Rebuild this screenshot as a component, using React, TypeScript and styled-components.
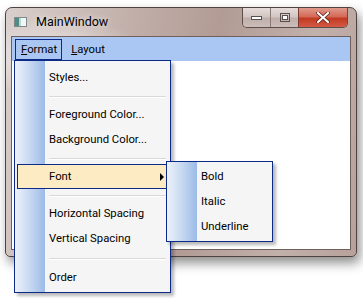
import React from 'react'
import styled, { createGlobalStyle } from 'styled-components'

const GlobalStyle = createGlobalStyle`
  html, body {
    margin: 0;
    padding: 0;
    background: #fff;
  }
  body {
    width: 363px;
    height: 299px;
    overflow: hidden;
    font-family: Roboto, 'Liberation Sans', sans-serif;
    font-size: 11.3px;
    color: #000;
  }
`

const Window = styled.div`
  margin: 7px 0 0 5px;
  width: 352px;
  height: 250px;
  box-sizing: border-box;
  border: 1px solid #4f4240;
  border-radius: 7px 7px 5px 5px;
  background: radial-gradient(ellipse 90px 40px at 15% 20%, rgba(255, 255, 255, 0.7), transparent),
    linear-gradient(100deg, #d9cfcc 0%, #c3b1ac 30%, #b29b95 55%, #c2b0ab 80%, #b8a19b 100%);
  box-shadow: 3px 6px 12px rgba(0, 0, 0, 0.45);
  display: flex;
  flex-direction: column;
`

const TitleBar = styled.div`
  height: 28px;
  display: flex;
  align-items: flex-start;
`

const AppIcon = styled.svg`
  margin: 9px 0 0 8px;
  flex: none;
`

const Title = styled.div`
  margin: 6px 0 0 9px;
  font-size: 12.5px;
  color: #000;
  text-shadow: 0 0 6px rgba(255, 255, 255, 0.9);
`

const Caption = styled.div`
  margin-left: auto;
  margin-right: 8px;
  display: flex;
  height: 19px;
  border: 1px solid #5c4e4b;
  border-top: none;
  border-radius: 0 0 5px 5px;
  overflow: hidden;
`

const CaptionButton = styled.div<{ $w: number; $close?: boolean }>`
  width: ${p => p.$w}px;
  display: flex;
  align-items: center;
  justify-content: center;
  border-left: ${p => (p.$close ? '1px solid #7a3a30' : '1px solid #8a7b78')};
  background: ${p =>
    p.$close
      ? 'linear-gradient(#e09a8c 0%, #d36a58 45%, #c23a22 55%, #d45a44 100%)'
      : 'linear-gradient(#e6dcda 0%, #d3c6c3 45%, #bfaeaa 55%, #cdbdb9 100%)'};
  &:first-child {
    border-left: none;
  }
`

const Client = styled.div`
  position: relative;
  flex: 1;
  margin: 0 5px 6px 5px;
  border: 1px solid #6e605d;
  background: #fff;
  display: flex;
  flex-direction: column;
`

const MenuBar = styled.div`
  height: 24px;
  background: #aac7f3;
  display: flex;
  align-items: flex-start;
  padding: 2px 0 0 3px;
  box-sizing: border-box;
`

const BarItem = styled.div<{ $open?: boolean }>`
  height: 21px;
  box-sizing: border-box;
  padding: 0 4px 0 5px;
  display: flex;
  align-items: center;
  border: 1px solid ${p => (p.$open ? '#0d2a86' : 'transparent')};
  margin-right: 3px;
`

const Key = styled.span`
  text-decoration: underline;
`

const Menu = styled.div<{ $left: number; $top: number; $width: number; $pad: number }>`
  position: absolute;
  left: ${p => p.$left}px;
  top: ${p => p.$top}px;
  width: ${p => p.$width}px;
  box-sizing: border-box;
  padding: ${p => p.$pad}px 0 2px;
  border: 1px solid #0d2a86;
  background: linear-gradient(90deg, #eef2fa 0px, #c9daf2 14px, #9cbbe7 30px, #f5f5f5 30px);
  box-shadow: 3px 3px 3px rgba(0, 0, 0, 0.28);
  display: flex;
  flex-direction: column;
`

const Item = styled.div<{ $active?: boolean }>`
  height: 25px;
  box-sizing: border-box;
  margin: 0 2px;
  padding-left: 31px;
  display: flex;
  align-items: center;
  border: 1px solid ${p => (p.$active ? '#0d2a86' : 'transparent')};
  background: ${p => (p.$active ? '#fdebc4' : 'transparent')};
`

const Arrow = styled.span`
  margin-left: auto;
  margin-right: 3px;
  width: 0;
  height: 0;
  border-top: 4px solid transparent;
  border-bottom: 4px solid transparent;
  border-left: 4px solid #000;
`

const Separator = styled.div<{ $h?: number }>`
  height: ${p => p.$h ?? 12}px;
  display: flex;
  align-items: center;
  margin: 0 4px 0 34px;
  &::after {
    content: '';
    flex: 1;
    height: 1px;
    background: #d9d9d9;
    box-shadow: 0 1px 0 #fff;
  }
`

export default function App() {
  return (
    <>
      <GlobalStyle />
      <Window>
        <TitleBar>
          <AppIcon width="13" height="10" viewBox="0 0 13 10">
            <rect x="0.5" y="0.5" width="12" height="9" fill="#f4f6f6" stroke="#7d8a8c" />
            <rect x="1" y="1" width="4" height="8" fill="#4e8c86" />
            <rect x="5" y="1" width="2" height="8" fill="#b9d7cf" />
          </AppIcon>
          <Title>MainWindow</Title>
          <Caption>
            <CaptionButton $w={27}>
              <svg width="11" height="4" viewBox="0 0 11 4">
                <rect x="0.5" y="0.5" width="10" height="3" fill="#fff" stroke="#58504e" />
              </svg>
            </CaptionButton>
            <CaptionButton $w={27}>
              <svg width="10" height="9" viewBox="0 0 10 9">
                <rect x="0.5" y="0.5" width="9" height="8" fill="none" stroke="#58504e" />
                <rect x="2.5" y="2.5" width="5" height="4" fill="#fff" stroke="#58504e" />
              </svg>
            </CaptionButton>
            <CaptionButton $w={48} $close>
              <svg width="14" height="11" viewBox="0 0 14 11">
                <path d="M2 1 L12 10 M12 1 L2 10" stroke="#5a1a12" strokeWidth="3.6" strokeLinecap="round" />
                <path d="M2 1 L12 10 M12 1 L2 10" stroke="#fff" strokeWidth="2.2" strokeLinecap="round" />
              </svg>
            </CaptionButton>
          </Caption>
        </TitleBar>
        <Client>
          <MenuBar>
            <BarItem $open>
              <span>
                <Key>F</Key>ormat
              </span>
            </BarItem>
            <BarItem>
              <span>
                <Key>L</Key>ayout
              </span>
            </BarItem>
          </MenuBar>
          <Menu $left={2} $top={23} $width={157} $pad={4}>
            <Item>Styles...</Item>
            <Separator />
            <Item>Foreground Color...</Item>
            <Item>Background Color...</Item>
            <Separator />
            <Item $active>
              Font
              <Arrow />
            </Item>
            <Separator />
            <Item>Horizontal Spacing</Item>
            <Item>Vertical Spacing</Item>
            <Separator $h={14} />
            <Item>Order</Item>
          </Menu>
          <Menu $left={154} $top={124} $width={107} $pad={2}>
            <Item>Bold</Item>
            <Item>Italic</Item>
            <Item>Underline</Item>
          </Menu>
        </Client>
      </Window>
    </>
  )
}
